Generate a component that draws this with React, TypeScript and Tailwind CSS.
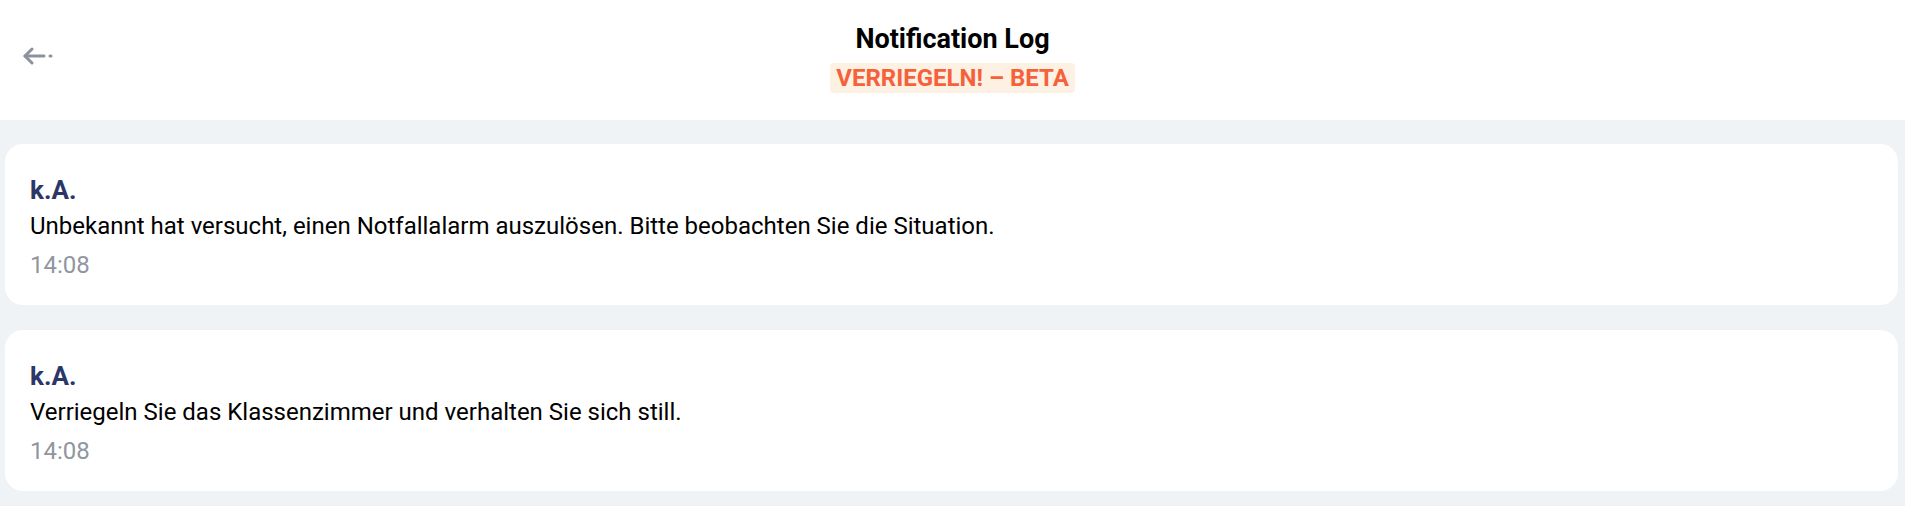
import React from 'react';

type Entry = { sender: string; message: string; time: string };

const entries: Entry[] = [
  { sender: "k.A.", message: "Unbekannt hat versucht, einen Notfallalarm auszulösen. Bitte beobachten Sie die Situation.", time: "14:08" },
  { sender: "k.A.", message: "Verriegeln Sie das Klassenzimmer und verhalten Sie sich still.", time: "14:08" },
];

const BackArrow = () => (
  <svg width="34" height="18" viewBox="0 0 34 18" fill="none" stroke="#8b929c" strokeWidth="3" strokeLinecap="round" strokeLinejoin="round">
    <path d="M9 2 L2 9 L9 16" />
    <path d="M2 9 H21" />
    <path d="M27 9 H28" />
  </svg>
);

const App: React.FC = () => {
  return (
    <div className="min-h-[506px] w-full bg-[#f0f3f6] font-['Roboto',sans-serif]">
      <header className="relative flex h-[120px] flex-col items-center bg-white pt-[21px]">
        <button className="absolute left-[23px] top-[47px]">
          <BackArrow />
        </button>
        <h1 className="text-[27px] font-bold leading-[36px] text-black">Notification Log</h1>
        <span className="mt-[6px] rounded-[4px] bg-[#fdf1e4] px-[6px] text-[24px] font-bold leading-[30px] text-[#f5613b]">
          VERRIEGELN! – BETA
        </span>
      </header>

      <div className="flex flex-col gap-[25px] pl-[5px] pr-[7px] pt-[24px] pb-[14px]">
        {entries.map((e, idx) => (
          <div key={idx} className="h-[161px] rounded-[18px] bg-white px-[25px] pt-[29px]">
            <h3 className="text-[26px] font-bold leading-[34px] text-[#2b3766]">{e.sender}</h3>
            <p className="text-[24px] leading-[38px] text-black">{e.message}</p>
            <p className="mt-[3px] text-[24px] leading-[34px] text-[#8f969f]">{e.time}</p>
          </div>
        ))}
      </div>
    </div>
  );
};

export default App;
